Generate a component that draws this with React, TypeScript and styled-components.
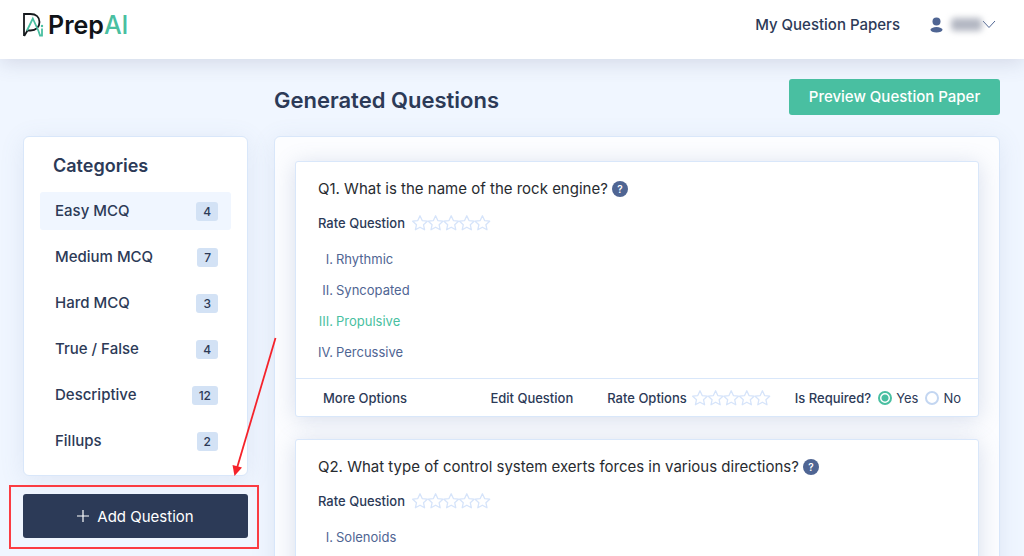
import React, { useState } from "react";
import styled, { createGlobalStyle } from "styled-components";

const navy = "#2c3a57";
const slate = "#4f6593";
const green = "#49bfa1";
const line = "#d9e7fa";

const GlobalStyle = createGlobalStyle`
  *, *::before, *::after { box-sizing: border-box; }
  html, body { margin: 0; }
  body {
    background: #f0f6ff;
    color: ${navy};
    font-family: Inter, "Liberation Sans", sans-serif;
    font-size: 15px;
  }
  button { font-family: inherit; cursor: pointer; }
  h1, h2, h3, ul, ol, p, fieldset { margin: 0; padding: 0; border: 0; }
  ul, ol { list-style: none; }
`;

const Shell = styled.div`
  display: flex;
  flex-direction: column;
  height: 100vh;
  overflow: hidden;
`;

const Header = styled.header`
  display: flex;
  flex: none;
  align-items: center;
  justify-content: space-between;
  height: 59px;
  padding: 0 28px 10px 22px;
  background: #fff;
  box-shadow: 0 4px 20px rgba(70, 80, 110, 0.17);
`;

const Brand = styled.a`
  display: flex;
  align-items: center;
  gap: 4px;
  color: #101418;
  font-size: 25px;
  line-height: 30px;
  font-weight: 600;
  text-decoration: none;
`;

const BrandAccent = styled.span`
  color: ${green};
  font-weight: 500;
`;

const Nav = styled.nav`
  display: flex;
  align-items: center;
  gap: 30px;
`;

const NavLink = styled.a`
  color: ${navy};
  font-size: 15px;
  line-height: 20px;
  font-weight: 500;
  text-decoration: none;
`;

const Account = styled.button`
  display: flex;
  align-items: center;
  gap: 8px;
  padding: 0;
  border: 0;
  background: none;
`;

const AccountName = styled.span`
  width: 31px;
  height: 13px;
  border-radius: 4px;
  background: #b3b7c2;
  filter: blur(3px);
`;

const Chevron = styled.svg`
  margin-left: -8px;
`;

const Page = styled.main`
  display: grid;
  flex: 1;
  min-height: 0;
  grid-template-columns: 225px minmax(0, 1fr);
  grid-template-rows: 77px auto;
  column-gap: 26px;
  padding: 0 24px 0 23px;
`;

const TitleBar = styled.div`
  grid-column: 2;
  display: flex;
  align-items: center;
  justify-content: space-between;
`;

const Title = styled.h1`
  padding-top: 4px;
  font-size: 22px;
  line-height: 32px;
  font-weight: 600;
`;

const PreviewButton = styled.button`
  width: 211px;
  height: 36px;
  margin-bottom: 2px;
  padding: 0;
  border: 0;
  border-radius: 3px;
  background: ${green};
  color: #fff;
  font-size: 15px;
  font-weight: 500;
`;

const Sidebar = styled.aside`
  display: flex;
  flex-direction: column;
  align-items: stretch;
  gap: 18px;
`;

const Categories = styled.section`
  padding: 15px 16px;
  border: 1px solid ${line};
  border-radius: 6px;
  background: #fff;
  box-shadow: 0 4px 24px rgba(100, 125, 175, 0.12);
`;

const CategoriesTitle = styled.h2`
  padding-left: 13px;
  margin-bottom: 12px;
  font-size: 18px;
  line-height: 28px;
  font-weight: 600;
`;

const CategoryList = styled.ul`
  display: flex;
  flex-direction: column;
  gap: 8px;
`;

const Category = styled.button<{ $active: boolean }>`
  display: flex;
  align-items: center;
  justify-content: space-between;
  width: 100%;
  height: 38px;
  padding: 0 13px 0 15px;
  border: 0;
  border-radius: 3px;
  background: ${(p) => (p.$active ? "#f0f6ff" : "transparent")};
  color: ${navy};
  font-size: 15px;
  line-height: 20px;
  font-weight: 500;
`;

const Count = styled.span`
  padding: 0 7px;
  border-radius: 3px;
  background: #d3e2f5;
  font-size: 12px;
  line-height: 19px;
`;

const AddArea = styled.div`
  position: relative;
`;

const AddButton = styled.button`
  display: flex;
  align-items: center;
  justify-content: center;
  gap: 8px;
  width: 100%;
  height: 44px;
  border: 0;
  border-radius: 3px;
  background: ${navy};
  color: #fff;
  font-size: 15px;
  font-weight: 400;
`;

const Highlight = styled.div`
  position: absolute;
  inset: -9px -11px -11px -14px;
  border: 2px solid #fb3c42;
  pointer-events: none;
`;

const Arrow = styled.svg`
  position: absolute;
  right: -30px;
  bottom: 60px;
  pointer-events: none;
`;

const Questions = styled.section`
  display: flex;
  flex-direction: column;
  gap: 22px;
  padding: 24px 20px;
  border: 1px solid ${line};
  border-radius: 6px;
  background: #fcfdff;
  box-shadow: 0 4px 24px rgba(100, 125, 175, 0.12);
`;

const Card = styled.article`
  flex: none;
  min-height: 256px;
  border: 1px solid ${line};
  border-radius: 3px;
  background: #fff;
  box-shadow: 0 3px 22px rgba(90, 115, 170, 0.22);
`;

const CardBody = styled.div`
  padding: 15px 22px 10px;
`;

const QuestionText = styled.h3`
  display: flex;
  align-items: center;
  gap: 4px;
  color: #282b30;
  font-size: 15px;
  line-height: 24px;
  font-weight: 400;
`;

const Help = styled.button`
  width: 16px;
  height: 16px;
  padding: 0;
  border: 0;
  border-radius: 50%;
  background: ${slate};
  color: #fff;
  font-size: 10px;
  line-height: 16px;
  font-weight: 600;
`;

const Rating = styled.div`
  display: flex;
  align-items: center;
  gap: 5px;
  font-size: 13px;
  line-height: 20px;
  font-weight: 500;
`;

const QuestionRating = styled(Rating)`
  gap: 7px;
  margin: 12px 0 11px;
`;

const Stars = styled.span`
  display: flex;
`;

const Options = styled.ol`
  color: ${slate};
  font-size: 13px;
  line-height: 31px;
`;

const Option = styled.li<{ $correct: boolean }>`
  display: grid;
  grid-template-columns: 15px auto;
  justify-content: start;
  gap: 3px;
  color: ${(p) => (p.$correct ? green : "inherit")};
`;

const Numeral = styled.span`
  justify-self: end;
  white-space: nowrap;
`;

const CardFooter = styled.footer`
  display: flex;
  align-items: center;
  height: 38px;
  padding: 0 17px 0 27px;
  border-top: 1px solid ${line};
`;

const TextButton = styled.button`
  padding: 0;
  border: 0;
  background: none;
  color: ${navy};
  font-size: 13px;
  line-height: 20px;
  font-weight: 500;
`;

const FooterActions = styled.div`
  display: flex;
  flex: 1;
  align-items: center;
  justify-content: space-between;
`;

const FooterGroup = styled.div`
  display: flex;
  align-items: center;
  gap: 34px;
`;

const Required = styled.fieldset`
  display: flex;
  align-items: center;
  gap: 7px;
  margin-left: 24px;
  font-size: 13px;
  line-height: 20px;
`;

const RequiredLabel = styled.span`
  font-weight: 500;
`;

const Choice = styled.label`
  display: flex;
  align-items: center;
  gap: 4px;
`;

const Radio = styled.input`
  appearance: none;
  width: 14px;
  height: 14px;
  margin: 0;
  border: 2px solid #c3d6f1;
  border-radius: 50%;
  &:checked {
    border-color: ${green};
    background: radial-gradient(circle, ${green} 0 3px, #fff 4px);
  }
`;

const StarRow = () => (
  <Stars role="img" aria-label="Not rated">
    <svg width="79" height="16" viewBox="0 0 79 16" fill="none" stroke="#d6e4fa" strokeWidth="1.3" strokeLinejoin="round">
      {[0, 1, 2, 3, 4].map((i) => (
        <path
          key={i}
          transform={`translate(${i * 15.6} 0)`}
          d="M8 0.8 L10.200 5.600 L15.300 6.200 L11.500 9.700 L12.600 14.800 L8 12.200 L3.400 14.800 L4.500 9.700 L0.700 6.200 L5.800 5.600 Z"
        />
      ))}
    </svg>
  </Stars>
);

const categories = [
  { name: "Easy MCQ", count: 4 },
  { name: "Medium MCQ", count: 7 },
  { name: "Hard MCQ", count: 3 },
  { name: "True / False", count: 4 },
  { name: "Descriptive", count: 12 },
  { name: "Fillups", count: 2 },
];

const questions = [
  {
    text: "Q1. What is the name of the rock engine?",
    options: ["Rhythmic", "Syncopated", "Propulsive", "Percussive"],
    answer: 2,
    complete: true,
  },
  {
    text: "Q2. What type of control system exerts forces in various directions?",
    options: ["Solenoids"],
    answer: -1,
    complete: false,
  },
];

const numerals = ["I.", "II.", "III.", "IV."];

type Question = (typeof questions)[number];

function QuestionActions({ id }: { id: number }) {
  const [required, setRequired] = useState(true);
  return (
    <CardFooter>
      <FooterActions>
        <TextButton>More Options</TextButton>
        <FooterGroup>
          <TextButton>Edit Question</TextButton>
          <Rating>
            Rate Options <StarRow />
          </Rating>
        </FooterGroup>
      </FooterActions>
      <Required aria-label="Is Required?">
        <RequiredLabel>Is Required?</RequiredLabel>
        <Choice>
          <Radio type="radio" name={`required-${id}`} checked={required} onChange={() => setRequired(true)} />
          Yes
        </Choice>
        <Choice>
          <Radio type="radio" name={`required-${id}`} checked={!required} onChange={() => setRequired(false)} />
          No
        </Choice>
      </Required>
    </CardFooter>
  );
}

function QuestionCard({ question, id }: { question: Question; id: number }) {
  return (
    <Card>
      <CardBody>
        <QuestionText>
          {question.text}
          <Help aria-label="Help">?</Help>
        </QuestionText>
        <QuestionRating>
          Rate Question <StarRow />
        </QuestionRating>
        <Options>
          {question.options.map((option, i) => (
            <Option key={option} $correct={i === question.answer}>
              <Numeral>{numerals[i]}</Numeral>
              {option}
            </Option>
          ))}
        </Options>
      </CardBody>
      {question.complete && <QuestionActions id={id} />}
    </Card>
  );
}

export default function App() {
  const [active, setActive] = useState(0);
  return (
    <Shell>
      <GlobalStyle />
      <Header>
        <Brand href="#">
          <svg width="22" height="26" viewBox="0 0 22 26" fill="none">
            <path d="M2 24 V2 H8.500 C14 2 17.500 5 17.500 10 C17.500 15 14 18.500 8.500 18.500 H5.500 L2.200 24" stroke="#15191d" strokeWidth="1.8" />
            <path d="M5 18.500 L10.800 6.500 L16.500 19 L18 23.500 H20 V16.500" stroke={green} strokeWidth="1.8" />
            <circle cx="20" cy="14" r="1.200" fill={green} />
          </svg>
          <span>
            Prep<BrandAccent>AI</BrandAccent>
          </span>
        </Brand>
        <Nav>
          <NavLink href="#">My Question Papers</NavLink>
          <Account aria-label="Account">
            <svg width="13" height="16" viewBox="0 0 13 16" fill={slate}>
              <circle cx="6.500" cy="4.500" r="4" />
              <ellipse cx="6.500" cy="12.800" rx="6" ry="2.700" />
            </svg>
            <AccountName />
            <Chevron width="14" height="9" viewBox="0 0 14 9" fill="none" stroke={slate}>
              <path d="M1 1 L7 7.500 L13 1" />
            </Chevron>
          </Account>
        </Nav>
      </Header>
      <Page>
        <TitleBar>
          <Title>Generated Questions</Title>
          <PreviewButton>Preview Question Paper</PreviewButton>
        </TitleBar>
        <Sidebar>
          <Categories>
            <CategoriesTitle>Categories</CategoriesTitle>
            <CategoryList>
              {categories.map((category, i) => (
                <li key={category.name}>
                  <Category $active={i === active} onClick={() => setActive(i)}>
                    {category.name}
                    <Count>{category.count}</Count>
                  </Category>
                </li>
              ))}
            </CategoryList>
          </Categories>
          <AddArea>
            <AddButton>
              <svg width="12" height="12" viewBox="0 0 12 12" stroke="#fff" strokeWidth="1.2">
                <path d="M6 0 V12 M0 6 H12" />
              </svg>
              Add Question
            </AddButton>
            <Highlight />
            <Arrow width="46" height="142" viewBox="0 0 46 142">
              <path d="M43.500 2 L5 132" stroke="#f5222a" strokeWidth="1.8" />
              <path d="M0.500 129 L10 131.500 L2.500 140 Z" fill="#f5222a" />
            </Arrow>
          </AddArea>
        </Sidebar>
        <Questions>
          {questions.map((question, i) => (
            <QuestionCard key={question.text} question={question} id={i} />
          ))}
        </Questions>
      </Page>
    </Shell>
  );
}
